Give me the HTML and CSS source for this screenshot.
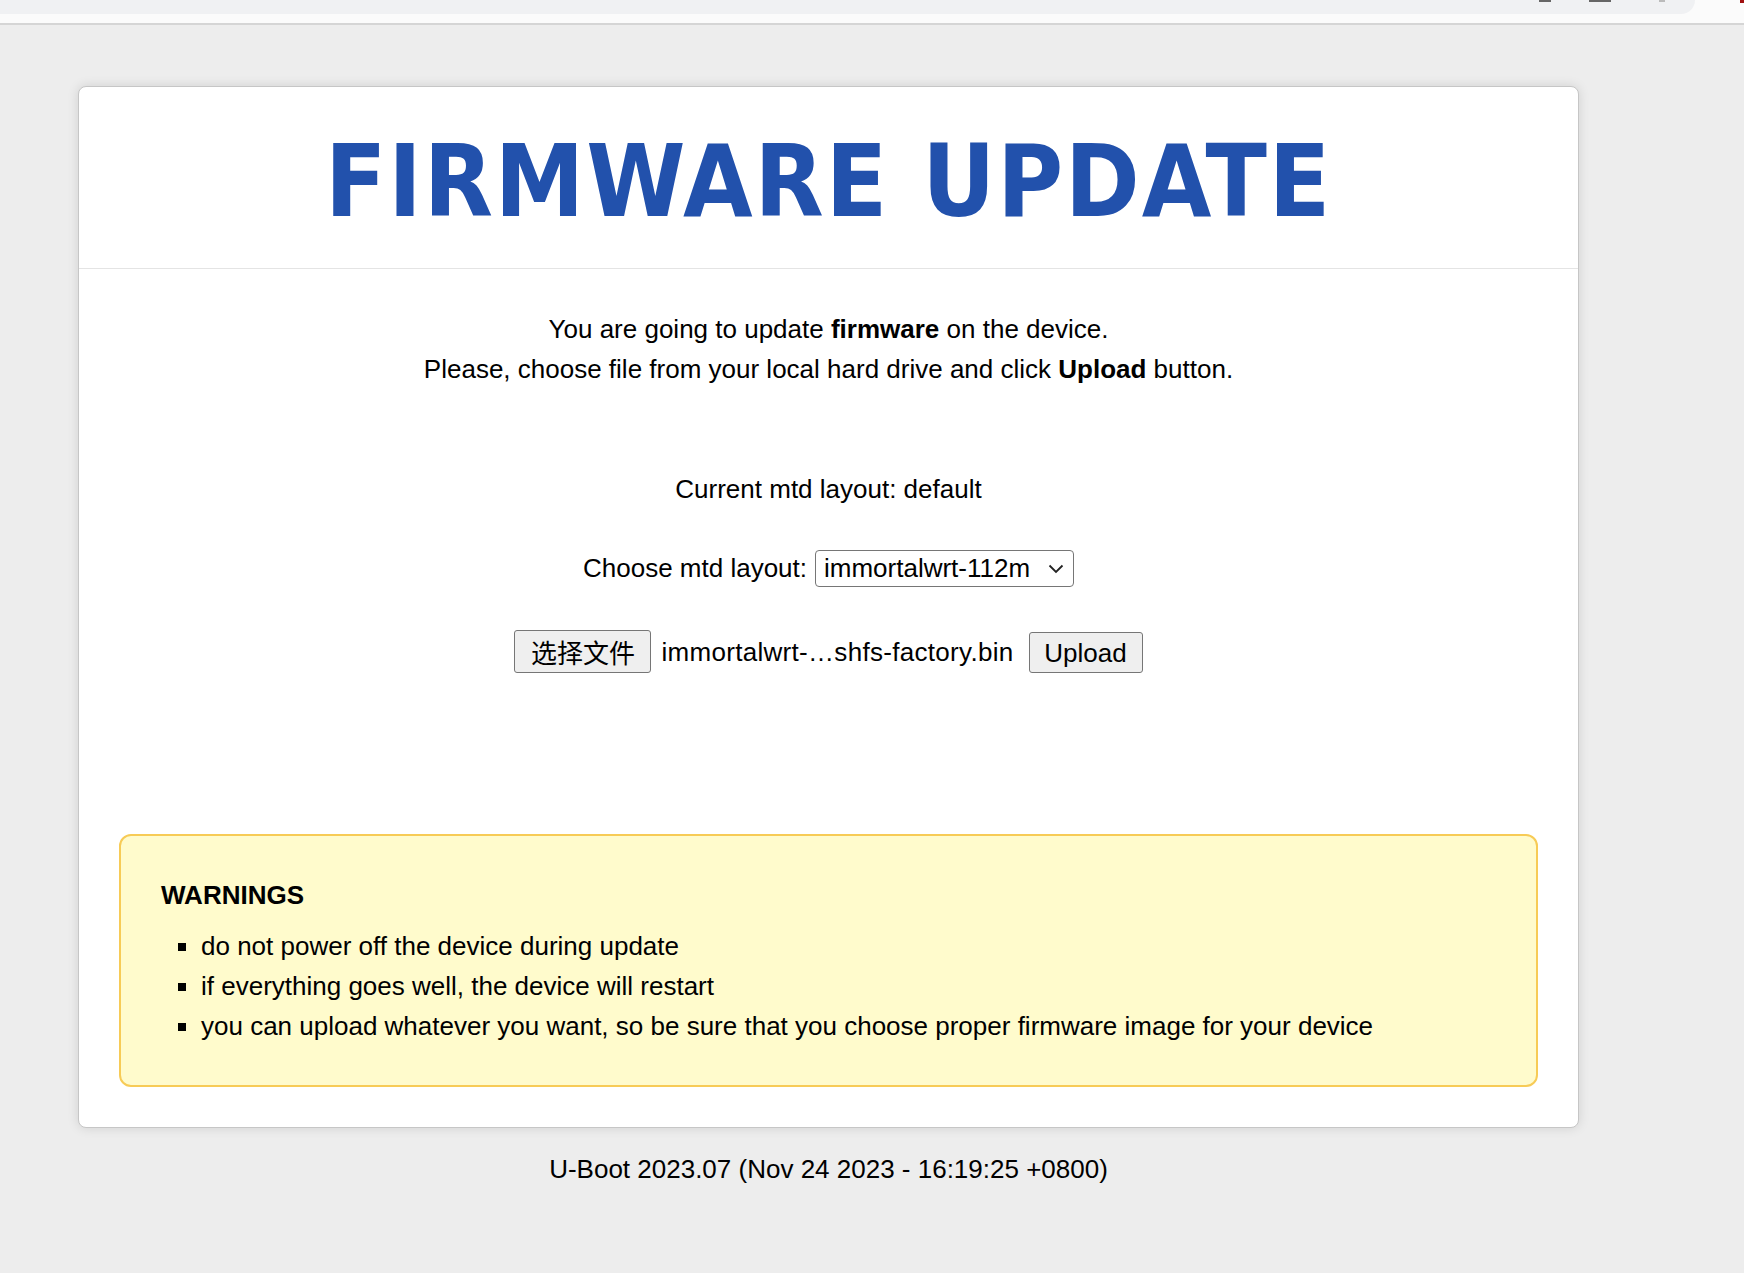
FILE: index.html
```html
<!DOCTYPE html>
<html>
<head>
    <meta charset="utf-8">
    <meta name="viewport" content="width=device-width, initial-scale=1">
    <title>Firmware update</title>
    <link rel="stylesheet" href="styles.css">
</head>
<body>
<div class="chrome">
    <div class="tabstrip">
        <span class="mark mark-a"></span>
        <span class="mark mark-b"></span>
        <span class="mark mark-c"></span>
    </div>
    <span class="mark-red"></span>
</div>

<div class="page">
    <div class="card">
        <div class="card-header">
            <h1 class="title">FIRMWARE UPDATE</h1>
        </div>
        <div class="card-body">
            <p class="intro">
                You are going to update <strong>firmware</strong> on the device.<br>
                Please, choose file from your local hard drive and click <strong>Upload</strong> button.
            </p>
            <p class="current">Current mtd layout: default</p>
            <form class="upload-form" method="post" enctype="multipart/form-data">
                <div class="row choose-row">
                    <span>Choose mtd layout:</span>
                    <div class="select-wrap">
                        <select name="mtd_layout" class="layout-select">
                            <option>immortalwrt-112m</option>
                            <option>default</option>
                        </select>
                        <svg class="chevron" width="16" height="10" viewBox="0 0 16 10">
                            <path d="M1.5 1.5 L8 8 L14.5 1.5" fill="none" stroke="#222" stroke-width="1.8"/>
                        </svg>
                    </div>
                </div>
                <div class="row file-row">
                    <span class="btn file-btn">选择文件</span>
                    <span class="file-name">immortalwrt-…shfs-factory.bin</span>
                    <span class="btn upload-btn">Upload</span>
                </div>
            </form>
            <div class="warnings">
                <div class="warnings-title">WARNINGS</div>
                <ul>
                    <li>do not power off the device during update</li>
                    <li>if everything goes well, the device will restart</li>
                    <li>you can upload whatever you want, so be sure that you choose proper firmware image for your device</li>
                </ul>
            </div>
        </div>
    </div>
    <div class="footer">U-Boot 2023.07 (Nov 24 2023 - 16:19:25 +0800)</div>
</div>
</body>
</html>
```

FILE: styles.css
```css
body {
    margin: 0;
    background-color: #ededed;
    font-family: "Liberation Sans", Arial, sans-serif;
    font-size: 26px;
    line-height: 40px;
    color: #000;
}

.chrome {
    height: 23px;
    background-color: #fbfbfb;
    border-bottom: 2px solid #d5d5d5;
    display: flex;
    align-items: flex-start;
}
.tabstrip {
    width: 1695px;
    height: 14px;
    background-color: #f0f1f3;
    border-bottom-right-radius: 14px;
    display: flex;
    justify-content: flex-end;
    padding-right: 30px;
    box-sizing: border-box;
}
.mark {
    height: 2px;
    background-color: #666;
}
.mark-a { width: 12px; margin-right: 38px; }
.mark-b { width: 22px; margin-right: 48px; }
.mark-c { width: 6px; background-color: #bbb; }
.mark-red {
    margin-left: auto;
    width: 4px;
    height: 3px;
    background-color: #a01010;
}

.page {
    width: 1501px;
    margin-left: 78px;
    padding-top: 61px;
}

.card {
    background-color: #fff;
    border: 1px solid #c6c6c6;
    border-radius: 8px;
    box-shadow: 0 0 12px rgba(0,0,0,0.12);
}
.card-header {
    height: 173px;
    padding-top: 8px;
    border-bottom: 1px solid #e4e4e4;
    display: flex;
    align-items: center;
    justify-content: center;
}
.title {
    margin: 0;
    font-family: "DejaVu Sans Condensed", "DejaVu Sans", sans-serif;
    font-stretch: condensed;
    font-weight: bold;
    font-size: 100px;
    line-height: 100px;
    letter-spacing: 1.9px;
    color: #2251ac;
}

.card-body {
    padding: 40px 40px 40px;
    text-align: center;
}
.intro, .current {
    margin: 0;
}
.current {
    margin-top: 80px;
}
.row {
    display: flex;
    justify-content: center;
    align-items: center;
}
.choose-row {
    margin-top: 39px;
    height: 40px;
    gap: 8px;
}
.select-wrap {
    position: relative;
}
.layout-select {
    appearance: none;
    -webkit-appearance: none;
    width: 259px;
    height: 37px;
    padding: 0 0 0 8px;
    font-family: "Liberation Sans", Arial, sans-serif;
    font-size: 26px;
    color: #000;
    background-color: #fff;
    border: 1px solid #767676;
    border-radius: 4px;
    display: block;
}
.chevron {
    position: absolute;
    right: 10px;
    top: 14px;
    pointer-events: none;
}

.file-row {
    margin-top: 42px;
    height: 43px;
}
.btn {
    box-sizing: border-box;
    display: inline-flex;
    align-items: center;
    justify-content: center;
    background-color: #efefef;
    border: 1px solid #767676;
    border-radius: 3px;
    color: #000;
}
.file-btn {
    width: 137px;
    height: 43px;
    font-family: "Noto Sans CJK SC", "Liberation Sans", sans-serif;
}
.file-name {
    margin: 0 15px 0 10px;
    letter-spacing: 0.3px;
}
.upload-btn {
    width: 114px;
    height: 41px;
    margin-top: 2px;
}

.warnings {
    margin-top: 161px;
    text-align: left;
    background-color: #fffbcc;
    border: 2px solid #f7cb56;
    border-radius: 12px;
    padding: 39px 40px 39px;
}
.warnings-title {
    font-weight: bold;
}
.warnings ul {
    margin: 11px 0 0 0;
    padding-left: 40px;
    list-style: square;
}

.footer {
    margin-top: 21px;
    text-align: center;
}
```
